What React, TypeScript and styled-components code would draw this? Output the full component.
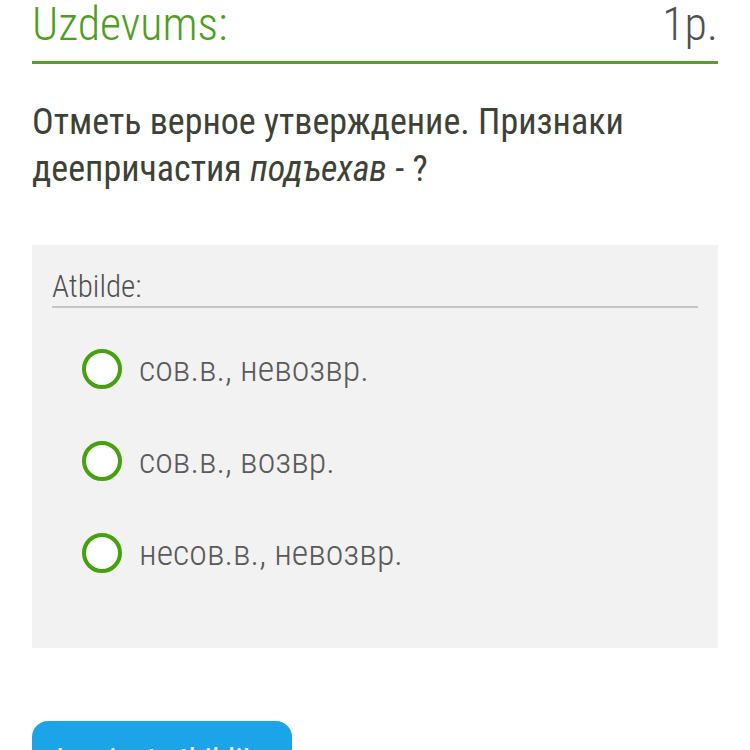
import styled, { createGlobalStyle } from 'styled-components';

const GlobalStyle = createGlobalStyle`
  html, body {
    margin: 0;
    padding: 0;
    background: #fff;
    overflow: hidden;
  }
  body {
    font-family: 'Roboto Condensed', 'Liberation Sans Narrow', Roboto, sans-serif;
  }
`;

const options = ['сов.в., невозвр.', 'сов.в., возвр.', 'несов.в., невозвр.'];

const App = () => {
  return (
    <>
      <GlobalStyle />
      <Page>
        <Header>
          <Title>Uzdevums:</Title>
          <Points>1p.</Points>
        </Header>
        <Question>
          Отметь верное утверждение. Признаки деепричастия <em>подъехав</em> - ?
        </Question>
        <AnswerBox>
          <AnswerLabel>Atbilde:</AnswerLabel>
          <Options>
            {options.map((o) => (
              <Option key={o}>
                <Radio />
                <OptionText>{o}</OptionText>
              </Option>
            ))}
          </Options>
        </AnswerBox>
        <SubmitButton>Iesniegt atbildi!</SubmitButton>
      </Page>
    </>
  );
};

export default App;

const Page = styled.div`
  width: 686px;
  margin: 0 32px;
`;

const Header = styled.div`
  display: flex;
  justify-content: space-between;
  align-items: flex-end;
  height: 67px;
  border-bottom: 3px solid #5a9e32;
  margin-top: -6px;
`;

const Title = styled.div`
  font-size: 46px;
  font-weight: 300;
  color: #4f9e22;
  line-height: 52px;
  margin-bottom: 11px;
`;

const Points = styled(Title)`
  color: #505050;
`;

const Question = styled.p`
  margin: 35px 0 0;
  font-size: 36px;
  line-height: 47px;
  color: #3e4236;

  em {
    font-style: italic;
  }
`;

const AnswerBox = styled.div`
  margin-top: 52px;
  background: #f2f2f2;
  padding: 23px 20px 0;
  height: 403px;
  box-sizing: border-box;
`;

const AnswerLabel = styled.div`
  font-size: 31px;
  font-weight: 300;
  color: #505050;
  line-height: 38px;
  border-bottom: 2px solid #c4c4c4;
`;

const Options = styled.div`
  display: flex;
  flex-direction: column;
  gap: 52px;
  margin-top: 41px;
  padding-left: 30px;
`;

const Option = styled.label`
  display: flex;
  align-items: center;
  gap: 17px;
  height: 40px;
`;

const Radio = styled.span`
  width: 40px;
  height: 40px;
  box-sizing: border-box;
  border: 4px solid #45a10f;
  border-radius: 50%;
  background: #fff;
  flex: none;
`;

const OptionText = styled.span`
  font-size: 35.8px;
  font-weight: 300;
  color: #5a5a5a;
`;

const SubmitButton = styled.button`
  margin-top: 73px;
  width: 260px;
  height: 64px;
  border: none;
  border-radius: 16px;
  background: #1ba4e8;
  color: #fff;
  font-family: inherit;
  font-size: 32px;
  text-align: left;
  padding: 12px 24px 0;
  display: block;
`;
